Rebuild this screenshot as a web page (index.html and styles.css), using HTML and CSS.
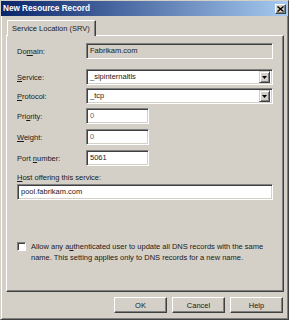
FILE: index.html
```html
<!DOCTYPE html>
<html>
<head>
<meta charset="utf-8">
<link rel="stylesheet" href="styles.css">
</head>
<body>
<div class="window">
  <div class="titlebar">
    <span class="title">New Resource Record</span>
    <div class="close">
      <svg width="7" height="6" viewBox="0 0 7 6"><path d="M0.5 0.5 L6.5 5.5 M6.5 0.5 L0.5 5.5" stroke="#000" stroke-width="1.4"/></svg>
    </div>
  </div>
  <div class="body">
    <div class="tabs"><div class="tab">Service Location (SRV)</div></div>
    <div class="panel">
      <div class="row">
        <span class="lbl">Do<u>m</u>ain:</span>
        <div class="field disabled wide">Fabrikam.com</div>
      </div>
      <div class="row service">
        <span class="lbl"><u>S</u>ervice:</span>
        <div class="field wide combo"><span class="val">_sipinternaltls</span><span class="drop"><svg width="5" height="3" viewBox="0 0 5 3"><path d="M0 0 H5 L2.5 3 Z" fill="#000"/></svg></span></div>
      </div>
      <div class="row protocol">
        <span class="lbl"><u>P</u>rotocol:</span>
        <div class="field wide combo"><span class="val">_tcp</span><span class="drop"><svg width="5" height="3" viewBox="0 0 5 3"><path d="M0 0 H5 L2.5 3 Z" fill="#000"/></svg></span></div>
      </div>
      <div class="row priority">
        <span class="lbl">Pri<u>o</u>rity:</span>
        <div class="field small"><span class="dim">0</span></div>
      </div>
      <div class="row weight">
        <span class="lbl"><u>W</u>eight:</span>
        <div class="field small"><span class="dim">0</span></div>
      </div>
      <div class="row port">
        <span class="lbl">Port <u>n</u>umber:</span>
        <div class="field small">5061</div>
      </div>
      <div class="hostlbl"><u>H</u>ost offering this service:</div>
      <div class="field full">pool.fabrikam.com</div>
      <div class="check">
        <span class="box"></span>
        <div class="checktext">
          <div class="line">Allow any a<u>u</u>thenticated user to update all DNS records with the same</div>
          <div class="line">name. This setting applies only to DNS records for a new name.</div>
        </div>
      </div>
    </div>
    <div class="buttons">
      <div class="btn">OK</div>
      <div class="btn">Cancel</div>
      <div class="btn">Help</div>
    </div>
  </div>
</div>
</body>
</html>
```
FILE: styles.css
```css
html, body {
  margin: 0;
  padding: 0;
  background: #d4d0c8;
}
body {
  font-family: "Liberation Sans", Arial, sans-serif;
  font-size: 7.5px;
  color: #1a1a1a;
}
.window {
  width: 289px;
  height: 320px;
  box-sizing: border-box;
  background: #d4d0c8;
  border: 1px solid;
  border-color: #d4d0c8 #404040 #404040 #d4d0c8;
  box-shadow: inset 1px 1px #ffffff, inset -1px -1px #808080;
  display: flex;
  flex-direction: column;
}
.titlebar {
  height: 15px;
  background: linear-gradient(to right, #0a246a, #a6caf0);
  display: flex;
  align-items: center;
  justify-content: space-between;
  padding: 0 2px 0 2px;
}
.title {
  color: #fff;
  font-weight: bold;
  font-size: 8.2px;
}
.close {
  width: 11px;
  height: 10px;
  box-sizing: border-box;
  background: #d4d0c8;
  border: 1px solid;
  border-color: #fff #404040 #404040 #fff;
  box-shadow: inset -1px -1px #808080;
  display: flex;
  align-items: center;
  justify-content: center;
}
.close svg { display: block; }
.body {
  padding: 4px 4px 0 5px;
  display: flex;
  flex-direction: column;
}
.tabs {
  display: flex;
  position: relative;
  z-index: 1;
  margin-bottom: -1px;
  padding-left: 1px;
}
.tab {
  height: 16px;
  width: 89px;
  box-sizing: border-box;
  background: #d4d0c8;
  border-top: 1px solid #fff;
  border-left: 1px solid #fff;
  border-right: 1px solid #404040;
  box-shadow: inset -1px 0 #808080;
  padding-left: 4px;
  line-height: 15px;
  white-space: nowrap;
}
.panel {
  height: 257px;
  box-sizing: border-box;
  border: 1px solid;
  border-color: #fff #404040 #404040 #fff;
  box-shadow: inset -1px -1px #808080;
  padding: 7px 10px 0 10px;
}
.row {
  display: flex;
  align-items: center;
  height: 16px;
  margin-top: 4px;
}
.row:first-child { margin-top: 0; }
.row.service { margin-top: 10px; }
.row.protocol { margin-top: 3px; }
.row.weight, .row.port { margin-top: 5px; }
.lbl {
  width: 69px;
  flex: none;
}
.field {
  height: 16px;
  box-sizing: border-box;
  background: #fff;
  border: 1px solid;
  border-color: #808080 #fff #fff #808080;
  box-shadow: inset 1px 1px #404040, inset -1px -1px #d4d0c8;
  padding: 0 3px;
  line-height: 14px;
  white-space: nowrap;
  display: flex;
  align-items: center;
}
.field.disabled { background: #d4d0c8; }
.field.wide { width: 187px; }
.field.small { width: 63px; }
.field.full { width: 256px; margin-top: 1px; }
.field.combo { padding-right: 2px; justify-content: space-between; }
.dim { color: #6a6a6a; }
.drop {
  width: 11px;
  height: 12px;
  box-sizing: border-box;
  background: #d4d0c8;
  border: 1px solid;
  border-color: #d4d0c8 #404040 #404040 #d4d0c8;
  box-shadow: inset 1px 1px #fff, inset -1px -1px #808080;
  display: flex;
  align-items: center;
  justify-content: center;
}
.drop svg { display: block; }
.hostlbl {
  margin-top: 6px;
  line-height: 11px;
}
.check {
  margin-top: 41px;
  display: flex;
  align-items: flex-start;
}
.box {
  width: 9px;
  height: 9px;
  box-sizing: border-box;
  flex: none;
  margin-top: 1px;
  background: #fff;
  border: 1px solid;
  border-color: #808080 #fff #fff #808080;
  box-shadow: inset 1px 1px #404040;
}
.checktext {
  margin-left: 5px;
  line-height: 11px;
  width: 241px;
}
.line {
  white-space: nowrap;
}
.buttons {
  display: flex;
  justify-content: flex-end;
  gap: 5px;
  margin-top: 5px;
  padding-right: 1px;
}
.btn {
  width: 53px;
  height: 16px;
  box-sizing: border-box;
  background: #d4d0c8;
  border: 1px solid;
  border-color: #fff #404040 #404040 #fff;
  box-shadow: inset -1px -1px #808080;
  display: flex;
  align-items: center;
  justify-content: center;
}
```
